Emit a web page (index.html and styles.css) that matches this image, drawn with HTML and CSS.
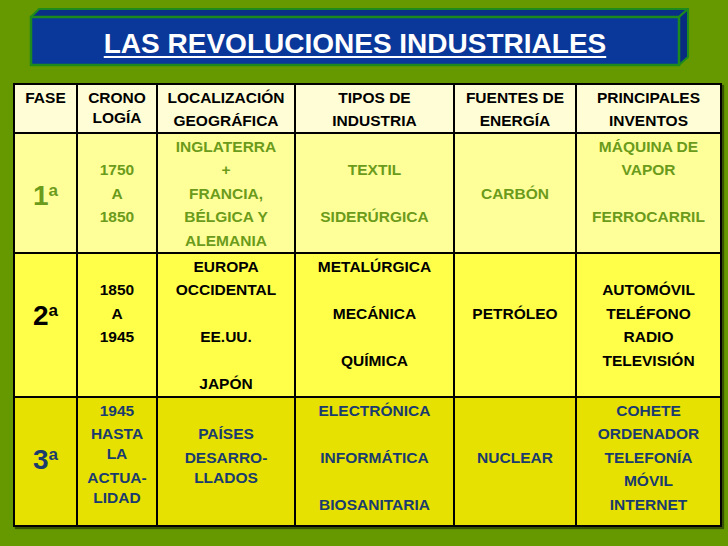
FILE: index.html
```html
<!DOCTYPE html>
<html lang="es">
<head>
<meta charset="utf-8">
<title>Las revoluciones industriales</title>
<link rel="stylesheet" href="styles.css">
</head>
<body>
<div class="slide">
  <header class="banner">
    <svg class="box" width="728" height="83" viewBox="0 0 728 83" aria-hidden="true">
      <polygon points="31,17 39,9 688,9 679,17" fill="#0a2f86" stroke="#1d8a1d" stroke-width="2" stroke-linejoin="round"/>
      <polygon points="679,17 688,9 688,57 679,65" fill="#082c80" stroke="#1d8a1d" stroke-width="2" stroke-linejoin="round"/>
      <rect x="31" y="17" width="648" height="48" fill="#0a389a" stroke="#1d8a1d" stroke-width="2.5"/>
    </svg>
    <h1 class="title">LAS REVOLUCIONES INDUSTRIALES</h1>
  </header>

  <table class="grid">
    <colgroup>
      <col class="c-fase"><col class="c-crono"><col class="c-loc"><col class="c-tipo"><col class="c-fuente"><col class="c-inv">
    </colgroup>
    <tr class="hd">
      <th><div class="p">FASE</div></th>
      <th><div class="p">CRONO</div><div class="w">LOGÍA</div></th>
      <th><div class="p">LOCALIZACIÓN</div><div class="p">GEOGRÁFICA</div></th>
      <th><div class="p">TIPOS DE</div><div class="p">INDUSTRIA</div></th>
      <th><div class="p">FUENTES DE</div><div class="p">ENERGÍA</div></th>
      <th><div class="p">PRINCIPALES</div><div class="p">INVENTOS</div></th>
    </tr>
    <tr class="r1">
      <td><div class="p"></div><div class="p"></div><div class="p big">1<sup>a</sup></div></td>
      <td><div class="p"></div><div class="p">1750</div><div class="p">A</div><div class="p">1850</div></td>
      <td><div class="p">INGLATERRA</div><div class="p">+</div><div class="p">FRANCIA,</div><div class="p">BÉLGICA Y</div><div class="p">ALEMANIA</div></td>
      <td><div class="p"></div><div class="p">TEXTIL</div><div class="p"></div><div class="p">SIDERÚRGICA</div></td>
      <td><div class="p"></div><div class="p"></div><div class="p">CARBÓN</div></td>
      <td><div class="p">MÁQUINA DE</div><div class="p">VAPOR</div><div class="p"></div><div class="p">FERROCARRIL</div></td>
    </tr>
    <tr class="r2">
      <td><div class="p"></div><div class="p"></div><div class="p big">2<sup>a</sup></div></td>
      <td><div class="p"></div><div class="p">1850</div><div class="p">A</div><div class="p">1945</div></td>
      <td><div class="p">EUROPA</div><div class="p">OCCIDENTAL</div><div class="p"></div><div class="p">EE.UU.</div><div class="p"></div><div class="p">JAPÓN</div></td>
      <td><div class="p">METALÚRGICA</div><div class="p"></div><div class="p">MECÁNICA</div><div class="p"></div><div class="p">QUÍMICA</div></td>
      <td><div class="p"></div><div class="p"></div><div class="p">PETRÓLEO</div></td>
      <td><div class="p"></div><div class="p">AUTOMÓVIL</div><div class="p">TELÉFONO</div><div class="p">RADIO</div><div class="p">TELEVISIÓN</div></td>
    </tr>
    <tr class="r3">
      <td><div class="p"></div><div class="p"></div><div class="p big">3<sup>a</sup></div></td>
      <td><div class="p">1945</div><div class="p">HASTA</div><div class="w">LA</div><div class="p">ACTUA-</div><div class="w">LIDAD</div></td>
      <td><div class="p"></div><div class="p">PAÍSES</div><div class="p">DESARRO-</div><div class="w">LLADOS</div></td>
      <td><div class="p">ELECTRÓNICA</div><div class="p"></div><div class="p">INFORMÁTICA</div><div class="p"></div><div class="p">BIOSANITARIA</div></td>
      <td><div class="p"></div><div class="p"></div><div class="p">NUCLEAR</div></td>
      <td><div class="p">COHETE</div><div class="p">ORDENADOR</div><div class="p">TELEFONÍA</div><div class="p">MÓVIL</div><div class="p">INTERNET</div></td>
    </tr>
  </table>
</div>
</body>
</html>
```
FILE: styles.css
```css
html, body {
  margin: 0;
  padding: 0;
}
body {
  background: #669900;
  font-family: "Liberation Sans", Arial, sans-serif;
}
.slide {
  width: 728px;
  height: 546px;
  overflow: hidden;
  background: #669900;
}
.banner {
  position: relative;
  height: 83px;
}
.box {
  position: absolute;
  left: 0;
  top: 0;
}
.title {
  position: relative;
  margin: 0 0 0 31px;
  width: 648px;
  padding-top: 28px;
  text-align: center;
  color: #ffffff;
  font-size: 28px;
  font-weight: bold;
  line-height: 32px;
  text-decoration: underline;
  text-decoration-thickness: 2px;
  text-underline-offset: 3px;
}
.grid {
  margin-left: 13px;
  border-collapse: collapse;
  table-layout: fixed;
  width: 707px;
  border: 2.5px solid #000;
  box-shadow: 2px 2px 1px rgba(0, 0, 0, 0.45);
}
.c-fase { width: 63px; }
.c-crono { width: 80px; }
.c-loc { width: 138px; }
.c-tipo { width: 159px; }
.c-fuente { width: 122px; }
.c-inv { width: 145px; }
.grid th, .grid td {
  border: 2.5px solid #000;
  padding: 3px 0 0 0;
  vertical-align: top;
  text-align: center;
  font-size: 15.5px;
  font-weight: bold;
  overflow: hidden;
}
.hd { height: 49px; }
.r1 { height: 120px; }
.r2 { height: 144px; }
.r3 { height: 129px; }
.hd th { background: #fffdd6; color: #000; }
.r1 td { background: #ffff99; color: #6b9b1b; }
.r2 td { background: #ffff4a; color: #000; }
.r3 td { background: #e6e100; color: #1a3b6e; }
.p {
  min-height: 20px;
  line-height: 20px;
  white-space: nowrap;
}
.p + .p,
.w + .p {
  margin-top: 3.4px;
}
.w {
  line-height: 20px;
  white-space: nowrap;
}
.big {
  font-size: 28px;
  position: relative;
  top: 2px;
}
.big sup {
  font-size: 17px;
  vertical-align: 9px;
  line-height: 0;
}
```
